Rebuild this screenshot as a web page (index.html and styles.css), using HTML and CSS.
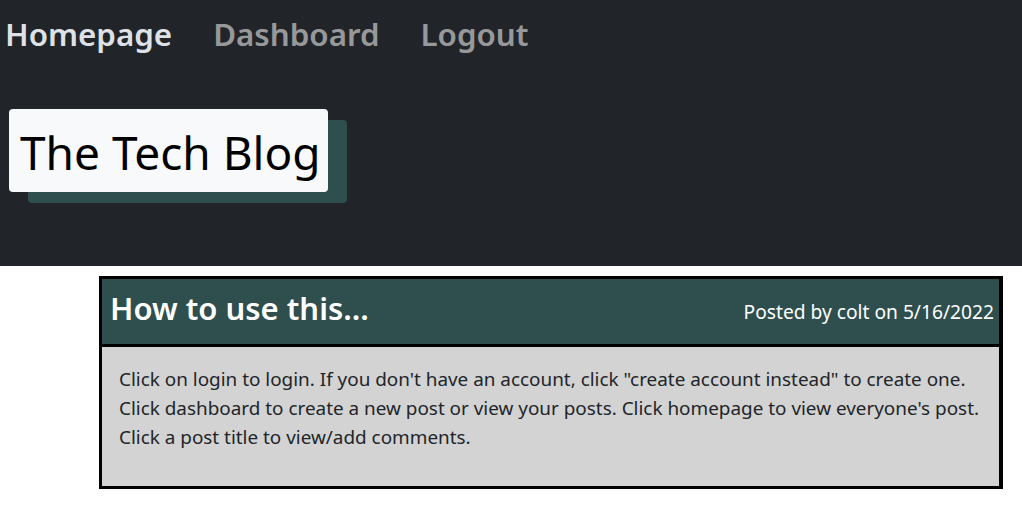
FILE: index.html
```html
<!DOCTYPE html>
<html lang="en">
<head>
<meta charset="utf-8">
<title>The Tech Blog</title>
<link rel="stylesheet" href="styles.css">
</head>
<body>
<header class="site-header">
  <nav class="nav">
    <a class="nav-link active" href="#">Homepage</a>
    <a class="nav-link" href="#">Dashboard</a>
    <a class="nav-link" href="#">Logout</a>
  </nav>
  <div class="brand-wrap">
    <h1 class="brand">The Tech Blog</h1>
  </div>
</header>
<main class="main">
  <article class="post">
    <div class="post-head">
      <h2 class="post-title">How to use this...</h2>
      <span class="post-meta">Posted by colt on 5/16/2022</span>
    </div>
    <div class="post-body">
      <p>Click on login to login. If you don't have an account, click "create account instead" to create one. Click dashboard to create a new post or view your posts. Click homepage to view everyone's post. Click a post title to view/add comments.</p>
    </div>
  </article>
</main>
</body>
</html>
```
FILE: styles.css
```css
* { box-sizing: border-box; }
body {
  margin: 0;
  font-family: "Noto Sans", "Open Sans", sans-serif;
  color: #212529;
  background: #fff;
}
.site-header {
  background: #212529;
  height: 266px;
  padding: 12px 0 0 5px;
}
.nav {
  display: flex;
  gap: 41px;
}
.nav-link {
  font-size: 31.3px;
  font-weight: 600;
  line-height: 44px;
  text-decoration: none;
  color: rgba(255, 255, 255, 0.55);
}
.nav-link.active { color: #dee2e6; }
.brand-wrap {
  padding: 53px 0 0 4px;
}
.brand {
  display: inline-block;
  margin: 0;
  background: #f8f9fa;
  color: #000;
  font-size: 46px;
  font-weight: 400;
  line-height: 86px;
  height: 83px;
  width: 319px;
  padding: 0 11px;
  border-radius: 4px;
  box-shadow: 19px 11px 0 #2f4f4f;
  white-space: nowrap;
}
.main {
  padding: 10px 19px 0 99px;
}
.post {
  border: 3px solid #000;
  border-right-width: 4px;
}
.post-head {
  background: #2f4f4f;
  color: #fff;
  height: 68px;
  border-bottom: 3px solid #000;
  display: flex;
  justify-content: space-between;
  align-items: center;
  padding: 0 5px 0 8px;
}
.post-title {
  margin: 0 0 8px;
  font-size: 31px;
  font-weight: 600;
}
.post-meta {
  font-size: 19.2px;
}
.post-body {
  background: #d3d3d3;
  height: 139px;
  padding: 18px 10px 0 17px;
}
.post-body p {
  margin: 0;
  font-size: 18.9px;
  line-height: 29px;
  color: #212529;
}
```
